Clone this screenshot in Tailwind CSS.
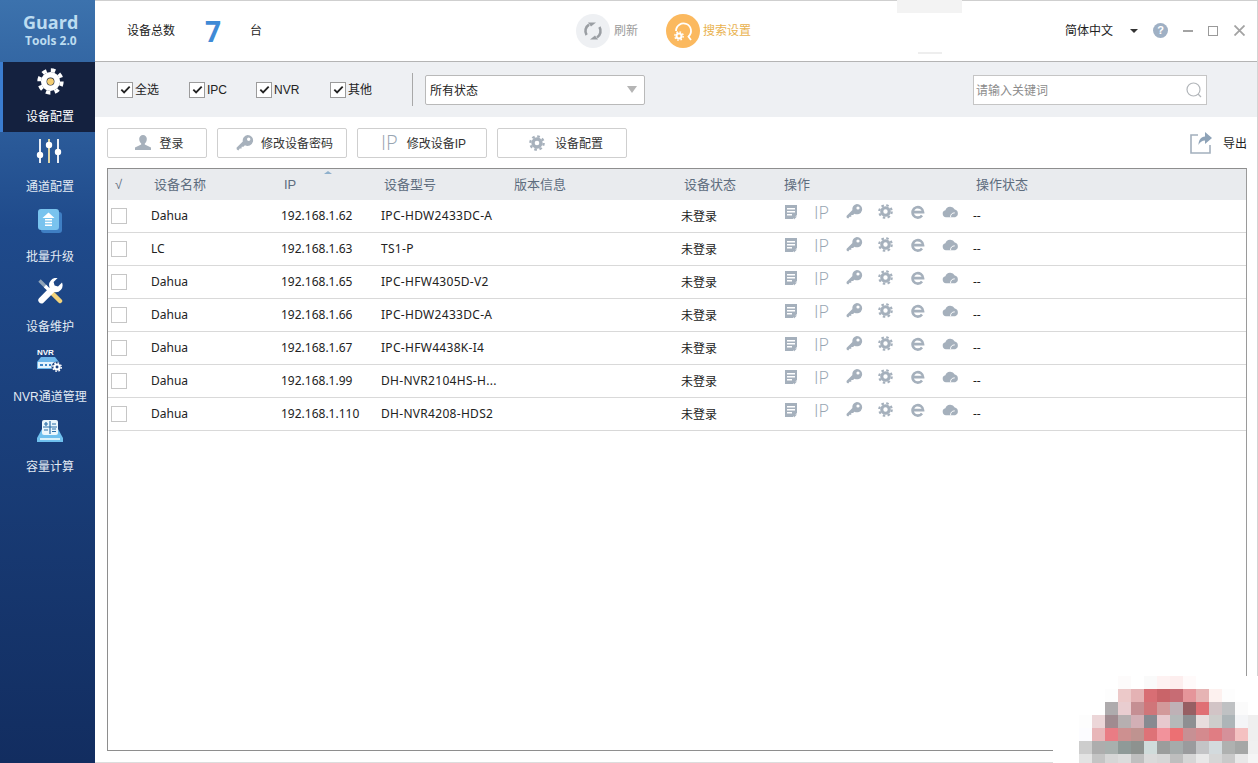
<!DOCTYPE html>
<html lang="zh-CN">
<head>
    <meta charset="UTF-8">
    <title>Guard Tools 2.0</title>
    <script src="https://cdn.jsdelivr.net/npm/@tailwindcss/browser@4"></script>
</head>
<body class="bg-white">
    <!-- shared icons -->
    <svg class="hidden" width="0" height="0">
        <symbol id="gear" viewBox="0 0 24 24">
            <circle cx="12" cy="12" r="10" fill="none" stroke="currentColor" stroke-width="3.4" stroke-dasharray="4 3.854"/>
            <circle cx="12" cy="12" r="6" fill="none" stroke="currentColor" stroke-width="5"/>
        </symbol>
        <symbol id="doc" viewBox="0 0 14 16">
            <path fill="currentColor" fill-rule="evenodd" d="M1 1h12v10l-4 4H1zM3 4v1.400h8V4zM3 7v1.400h8V7zM3 10v1.400h5V10z"/>
            <path fill="currentColor" d="M10 12.500h3L10 15.500z"/>
        </symbol>
        <symbol id="key" viewBox="0 0 18 18">
            <path fill="currentColor" fill-rule="evenodd" d="M11.500 1a5.500 5.500 0 1 1-2.600 10.300L7.500 12.700H5.600v1.900H3.700L2.400 16.500.8 15.600l-.3-1.800 6.300-6.300A5.500 5.500 0 0 1 11.500 1zm1.200 2.600a1.700 1.700 0 1 0 0 3.400 1.700 1.700 0 0 0 0-3.400z"/>
        </symbol>
        <symbol id="ie" viewBox="0 0 16 16">
            <path fill="none" stroke="currentColor" stroke-width="3" d="M2.200 8.200h11.600A6 6 0 1 0 12.600 12"/>
        </symbol>
        <symbol id="cloud" viewBox="0 0 18 12">
            <path fill="currentColor" d="M4.200 11.500A3.700 3.700 0 0 1 3.600 4.200 5.400 5.400 0 0 1 13.500 3.400a4.200 4.200 0 0 1 .4 8.100z"/>
            <path fill="none" stroke="#ffffff" stroke-width="1" d="M9 11.500c0-3 1.600-4.600 4.500-4.600"/>
        </symbol>
        <symbol id="check" viewBox="0 0 14 14">
            <path fill="none" stroke="#222222" stroke-width="2" d="M2.500 7.200l3 3 6-6.200"/>
        </symbol>
    </svg>

    <div class="relative flex w-[1258px] h-[763px] overflow-hidden font-['Liberation_Sans','Noto_Sans_CJK_SC',sans-serif] text-[12px] text-[#222]">
        <!-- Sidebar -->
        <div class="w-[95px] h-full shrink-0 bg-gradient-to-b from-[#3c72ad] via-[#1f4a8b] via-30% to-[#122d60] text-[#e3ebf4]">
            <div class="h-[62px] pt-[13px] pl-[23px] font-['Open_Sans',sans-serif] font-bold text-[#bcdcf0]">
                <div class="text-[18px] leading-[19px]">Guard</div>
                <div class="text-[12px] leading-[17px] ml-[2px]">Tools 2.0</div>
            </div>
            <!-- active item -->
            <div class="h-[70px] pt-[1px] pl-[2px] bg-[#14213f] border-l-[3px] border-[#3b7dd0] flex flex-col items-center text-white">
                <div class="h-[38px] flex items-center justify-center">
                    <svg class="w-[27px] h-[27px] text-white" viewBox="0 0 24 24"><use href="#gear"/><circle cx="12" cy="12" r="3" fill="#f4cd70"/></svg>
                </div>
                <div class="h-[32px] leading-[35px]">设备配置</div>
            </div>
            <div class="h-[70px] pl-[5px] flex flex-col items-center">
                <div class="h-[38px] flex items-center justify-center">
                    <svg class="w-[28px] h-[26px]" viewBox="0 0 28 26">
                        <path stroke="#ffffff" stroke-width="1.800" d="M4 1v24M22 1v24" fill="none"/>
                        <path stroke="#f5e6a8" stroke-width="1.800" d="M13 1v24" fill="none"/>
                        <circle cx="4" cy="17" r="3.200" fill="#ffffff"/><circle cx="13" cy="7" r="3.200" fill="#ffffff"/><circle cx="22" cy="14" r="3.200" fill="#ffffff"/>
                    </svg>
                </div>
                <div class="h-[32px] leading-[34px]">通道配置</div>
            </div>
            <div class="h-[70px] pl-[5px] flex flex-col items-center">
                <div class="h-[38px] flex items-center justify-center">
                    <svg class="w-[24px] h-[24px]" viewBox="0 0 24 24">
                        <rect x="3" y="3" width="21" height="21" rx="3" fill="#3f7fc4"/>
                        <rect x="0" y="0" width="21" height="21" rx="3" fill="#79c3ee"/>
                        <path fill="#ffffff" d="M10.500 3.500l6 5.500h-12zM7 10h7v1.600H7zM7 12.700h7v1.600H7zM7 15.400h7V17H7z"/>
                    </svg>
                </div>
                <div class="h-[32px] leading-[34px]">批量升级</div>
            </div>
            <div class="h-[70px] pl-[5px] flex flex-col items-center">
                <div class="h-[38px] flex items-center justify-center">
                    <svg class="w-[26px] h-[26px]" viewBox="0 0 26 26">
                        <path stroke="#8fa3b8" stroke-width="3.400" d="M2.500 2.500l7 7" fill="none"/>
                        <path stroke="#ffffff" stroke-width="3.400" d="M8 8l5 5" fill="none"/>
                        <path stroke="#f2d27a" stroke-width="4.500" stroke-linecap="round" d="M14 14l9 9" fill="none"/>
                        <path fill="#ffffff" d="M25 4.500l-4 4-3.400-1 -1-3.400 4-4a7 7 0 0 0-8 9.400L2 20.200a3.200 3.200 0 0 0 4.500 4.500l10.700-10.600A7 7 0 0 0 25 4.500z"/>
                    </svg>
                </div>
                <div class="h-[32px] leading-[34px]">设备维护</div>
            </div>
            <div class="h-[70px] pl-[5px] flex flex-col items-center">
                <div class="relative h-[38px] w-[26px]">
                    <span class="absolute left-0 top-[6px] text-[8px] leading-[9px] font-bold text-white">NVR</span>
                    <svg class="absolute left-0 top-[9px] w-[26px] h-[22px]" viewBox="0 0 26 22">
                        <path fill="#6fb7ea" d="M4 6h14l4 5v7H0v-7z"/>
                        <rect x="1" y="11" width="20" height="6" fill="#e6f3fc"/>
                        <path fill="#3f86c8" d="M3 13h3v2H3zM8 13h2v2H8zM12 13h2v2h-2z"/>
                        <circle cx="20" cy="16" r="5.500" fill="#1f4482"/>
                        <g transform="translate(15 11) scale(.42)" class="text-white"><use href="#gear" width="24" height="24"/></g>
                    </svg>
                </div>
                <div class="h-[32px] leading-[34px] whitespace-nowrap">NVR通道管理</div>
            </div>
            <div class="h-[70px] pl-[5px] flex flex-col items-center">
                <div class="h-[38px] flex items-center justify-center">
                    <svg class="w-[26px] h-[24px]" viewBox="0 0 26 24">
                        <path fill="#6fc0ee" d="M5 10h16l5 9v4H0v-4z"/>
                        <rect x="5" y="1" width="16" height="15" rx="2" fill="#eaf6fc"/>
                        <path stroke="#2a6ea8" stroke-width="1.200" d="M7 5h4M9 3v4M15 5h4M7 11h4M15 10h4M15 12.500h4M13 2v13M6 8h14" fill="none"/>
                        <rect x="3" y="19" width="20" height="2" fill="#d8f1fb"/>
                    </svg>
                </div>
                <div class="h-[32px] leading-[34px]">容量计算</div>
            </div>
        </div>

        <!-- Main -->
        <div class="flex-1 h-full flex flex-col border-t border-r border-b border-t-[#cfcfcf] border-r-[#d4d4d4] border-b-[#dddddd]">
            <!-- Header -->
            <div class="h-[61px] shrink-0 flex items-center border-b border-[#b4b4b4] pb-[1px]">
                <span class="ml-[32px]">设备总数</span>
                <span class="ml-[30px] w-[45px] text-[28px] font-bold leading-none font-['Open_Sans',sans-serif] text-[#3f8ad6]">7</span>
                <span>台</span>
                <div class="ml-[314px] w-[34px] h-[34px] rounded-full bg-[#eef0f3] flex items-center justify-center">
                    <svg class="w-[20px] h-[20px]" viewBox="0 0 20 20" fill="none" stroke="#9a9ea3" stroke-width="2.600">
                        <path d="M3.600 14A7.500 7.500 0 0 1 6 3.600"/><path d="M16.400 6A7.500 7.500 0 0 1 14 16.400"/>
                        <path fill="#9a9ea3" stroke="none" d="M5 1.500h8L8 5.500zM15 18.500H7l5-4z"/>
                    </svg>
                </div>
                <span class="ml-[4px] text-[#9b9b9b]">刷新</span>
                <div class="ml-[28px] w-[34px] h-[34px] rounded-full bg-[#fbb95f] flex items-center justify-center">
                    <svg class="w-[24px] h-[24px]" viewBox="0 0 24 24" fill="none">
                        <path stroke="#ffffff" stroke-width="1.800" d="M5 12A7.500 7.500 0 1 1 17.500 17.500M17 17l3 4"/>
                        <g class="text-white"><use href="#gear" x="3" y="12" width="10" height="10"/></g>
                    </svg>
                </div>
                <span class="ml-[3px] text-[#e9b24f]">搜索设置</span>
                <span class="ml-[314px]">简体中文</span>
                <span class="ml-[17px] w-0 h-0 border-x-[4px] border-x-transparent border-t-[4px] border-t-[#333]"></span>
                <span class="ml-[15px] w-[15px] h-[15px] rounded-full bg-[#9fb0c4] text-white text-[11px] font-bold leading-[15px] text-center">?</span>
                <span class="ml-[15px] w-[10px] h-[2px] bg-[#a3a3a3]"></span>
                <span class="ml-[15px] w-[10px] h-[10px] border border-[#9a9a9a]"></span>
                <svg class="ml-[16px] w-[11px] h-[11px]" viewBox="0 0 11 11"><path stroke="#a3a3a3" stroke-width="1.800" d="M.5.5l10 10M10.500.5l-10 10"/></svg>
            </div>

            <!-- Filter bar -->
            <div class="h-[55px] shrink-0 bg-[#eef0f3] flex items-center">
                <label class="ml-[22px] flex items-center gap-[2px] w-[72px]"><span class="w-[16px] h-[16px] bg-white border border-[#9b9b9b] flex items-center justify-center"><svg class="w-[13px] h-[13px]"><use href="#check"/></svg></span>全选</label>
                <label class="flex items-center gap-[2px] w-[67px]"><span class="w-[16px] h-[16px] bg-white border border-[#9b9b9b] flex items-center justify-center"><svg class="w-[13px] h-[13px]"><use href="#check"/></svg></span>IPC</label>
                <label class="flex items-center gap-[2px] w-[74px]"><span class="w-[16px] h-[16px] bg-white border border-[#9b9b9b] flex items-center justify-center"><svg class="w-[13px] h-[13px]"><use href="#check"/></svg></span>NVR</label>
                <label class="flex items-center gap-[2px] w-[82px]"><span class="w-[16px] h-[16px] bg-white border border-[#9b9b9b] flex items-center justify-center"><svg class="w-[13px] h-[13px]"><use href="#check"/></svg></span>其他</label>
                <span class="w-px h-[33px] bg-[#a8a8a8]"></span>
                <div class="ml-[12px] w-[220px] h-[30px] bg-white border border-[#b9b9b9] rounded-[2px] flex items-center justify-between pl-[4px] pr-[7px]">
                    <span class="pt-[2px]">所有状态</span>
                    <span class="w-0 h-0 border-x-[5px] border-x-transparent border-t-[7px] border-t-[#b5b5b5]"></span>
                </div>
                <div class="ml-[328px] w-[234px] h-[30px] bg-white border border-[#c5c5c5] flex items-center justify-between pl-[2px] pr-[4px]">
                    <span class="pt-[2px] text-[#8b8b8b]">请输入关键词</span>
                    <svg class="w-[16px] h-[16px]" viewBox="0 0 16 16" fill="none" stroke="#b2b6ba" stroke-width="1.200"><circle cx="7.500" cy="7.500" r="6.500"/><path d="M12 12l3 3"/></svg>
                </div>
            </div>

            <!-- Toolbar -->
            <div class="h-[51px] shrink-0 flex items-center pl-[12px] pt-[1px]">
                <button class="w-[100px] h-[30px] pl-[5px] border border-[#cfcfcf] rounded-[2px] flex items-center justify-center gap-[8px] text-[#333]">
                    <svg class="w-[16px] h-[16px]" viewBox="0 0 16 16"><path fill="#a7b1bc" d="M8 0a3.800 3.800 0 0 1 3.800 4c0 2-1 3.600-2 4.400v1.200L16 12.500V15H0v-2.500l6.200-2.900V8.400c-1-.8-2-2.400-2-4.400A3.800 3.800 0 0 1 8 0z"/></svg><span class="pt-[2px]">登录</span>
                </button>
                <button class="ml-[10px] w-[130px] h-[30px] pl-[5px] border border-[#cfcfcf] rounded-[2px] flex items-center justify-center gap-[7px] text-[#333]">
                    <svg class="w-[18px] h-[18px] text-[#a7b1bc]"><use href="#key"/></svg><span class="pt-[2px]">修改设备密码</span>
                </button>
                <button class="ml-[10px] w-[130px] h-[30px] pl-[3px] border border-[#cfcfcf] rounded-[2px] flex items-center justify-center gap-[9px] text-[#333]">
                    <span class="font-['Open_Sans',sans-serif] font-light text-[20px] leading-none text-[#98a5b2]">IP</span><span class="pt-[2px]">修改设备IP</span>
                </button>
                <button class="ml-[10px] w-[130px] h-[30px] pl-[8px] border border-[#cfcfcf] rounded-[2px] flex items-center justify-center gap-[10px] text-[#333]">
                    <svg class="w-[16px] h-[16px] text-[#a7b1bc]"><use href="#gear"/></svg><span class="pt-[2px]">设备配置</span>
                </button>
                <svg class="ml-auto w-[22px] h-[22px]" viewBox="0 0 22 22" fill="none">
                    <path stroke="#a3b0bd" stroke-width="1.600" d="M8 3H1v18h19v-8"/>
                    <path fill="#8ea3b8" d="M15 0l7 6-7 6V8.500c-3 0-5 1.500-6.500 4.500 0-5 2.500-8 6.500-8.500z"/>
                </svg>
                <span class="ml-[11px] mr-[10px] pt-[2px]">导出</span>
            </div>

            <!-- Table -->
            <div class="ml-[12px] mr-[10px] h-[583px] border border-[#8e8e8e] border-r-[#9a9a9a]">
                <div class="relative h-[31px] bg-[#e9ebee] grid grid-cols-[43px_130px_100px_130px_170px_100px_192px_1fr] items-center text-[13px] text-[#5e6d7e]">
                    <span class="pl-[7px]">√</span>
                    <span class="pl-[3px]">设备名称</span>
                    <span class="pl-[3px]">IP</span>
                    <span class="pl-[3px]">设备型号</span>
                    <span class="pl-[3px]">版本信息</span>
                    <span class="pl-[3px]">设备状态</span>
                    <span class="pl-[3px]">操作</span>
                    <span class="pl-[3px]">操作状态</span>
                    <span class="absolute left-[216px] top-[2px] w-0 h-0 border-x-[4px] border-x-transparent border-b-[3px] border-b-[#8fb0cc]"></span>
                </div>
                <div id="rows"></div>
            </div>
        </div>

        <!-- Faint marks and mosaic lying over the picture -->
        <div class="absolute left-[897px] top-0 w-[65px] h-[13px] bg-[#f3f3f3]"></div>
        <div class="absolute left-[918px] top-[52px] w-[24px] h-[2px] bg-[#eeeeee]"></div>
        <div class="absolute left-[1053px] top-[676px] w-[205px] h-[87px] bg-white rounded-t-[70px]"></div>
        <div id="mosaic" class="absolute left-[1079px] top-[676px] w-[182px] grid grid-cols-[repeat(14,13px)] auto-rows-[13px]"></div>
    </div>

    <script>
        const devices = [
            ['Dahua', '192.168.1.62', 'IPC-HDW2433DC-A'],
            ['LC', '192.168.1.63', 'TS1-P'],
            ['Dahua', '192.168.1.65', 'IPC-HFW4305D-V2'],
            ['Dahua', '192.168.1.66', 'IPC-HDW2433DC-A'],
            ['Dahua', '192.168.1.67', 'IPC-HFW4438K-I4'],
            ['Dahua', '192.168.1.99', 'DH-NVR2104HS-H...'],
            ['Dahua', '192.168.1.110', 'DH-NVR4208-HDS2']
        ];

        document.getElementById('rows').innerHTML = devices.map(d => `
            <div class="h-[33px] pt-[2px] border-b border-[#d9d9d9] grid grid-cols-[43px_130px_100px_130px_170px_100px_192px_1fr] items-center font-['Noto_Sans','Noto_Sans_CJK_SC',sans-serif]">
                <span class="ml-[3px] w-[16px] h-[16px] bg-white border border-[#c6c6c6]"></span>
                <span class="pt-[1px]">${d[0]}</span>
                <span class="pt-[1px]">${d[1]}</span>
                <span class="pt-[1px] tracking-[0.3px] whitespace-nowrap">${d[2]}</span>
                <span></span>
                <span class="font-['Liberation_Sans','Noto_Sans_CJK_SC',sans-serif] pt-[3px]">未登录</span>
                <div class="flex items-center h-[16px] mb-[8px] pl-[3px] text-[#a5b0bc]">
                    <svg class="w-[14px] h-[16px]"><use href="#doc"/></svg>
                    <span class="ml-[16px] w-[15px] font-['Open_Sans',sans-serif] font-light text-[18px] leading-none text-[#98a5b2]">IP</span>
                    <svg class="ml-[17px] w-[17px] h-[17px]"><use href="#key"/></svg>
                    <svg class="ml-[15px] w-[15px] h-[15px]"><use href="#gear"/></svg>
                    <svg class="ml-[18px] w-[14px] h-[14px]"><use href="#ie"/></svg>
                    <svg class="ml-[17px] w-[17px] h-[12px]"><use href="#cloud"/></svg>
                </div>
                <span class="pt-[1px]">--</span>
                <span></span>
            </div>`).join('');

        // pixelated stamp in the lower right corner
        const cells = [
            'ffffff ffffff ffffff fdfbfb ffffff fafafa fef2f2 fdeeee fffafa ffffff ffffff ffffff ffffff ffffff',
            'ffffff ffffff fdfdfd ecc9c9 e4b2b4 d86e74 c96469 c76c74 e5959a e6b4b4 fdf1ef fdfdfd ffffff ffffff',
            'ffffff ffffff aeabad e9cdd0 c58f93 d07579 d2999a bfb1b6 975f63 e06f74 d2c4c6 bfc1c3 fbfbfb ffffff',
            'fdfdfd ecd6d8 a08b90 b6afb0 d2afb5 888a91 e7c9ce b5b9b9 8e8f92 e8dddd cdcdcb adb5b8 f4f5f7 efefef',
            'fcfcff e8b6b9 e97c84 cd9090 bf9390 de7277 f2929b ec7073 c79094 d48a8e e07d83 d5919a f4c1c1 efefef',
            'cdcdcd adadad a8b0ae 8f9a98 8d928f d0dcdb 9b9d9c a5abab 9a9b9d c3c4c6 d3dadd afb1b0 a5a7a6 f0f0f0',
            'e3e3e3 c4c4c4 d6d6d6 dcdcdc bfbfbf dadada d6d6d6 bebebe d6d6d6 e8e8e8 d6d6d6 c9c9c9 e8e8e8 f5f5f5'
        ];
        document.getElementById('mosaic').innerHTML = cells.join(' ').split(' ')
            .map(c => `<span style="background:#${c}"></span>`).join('');
    </script>
</body>
</html>
